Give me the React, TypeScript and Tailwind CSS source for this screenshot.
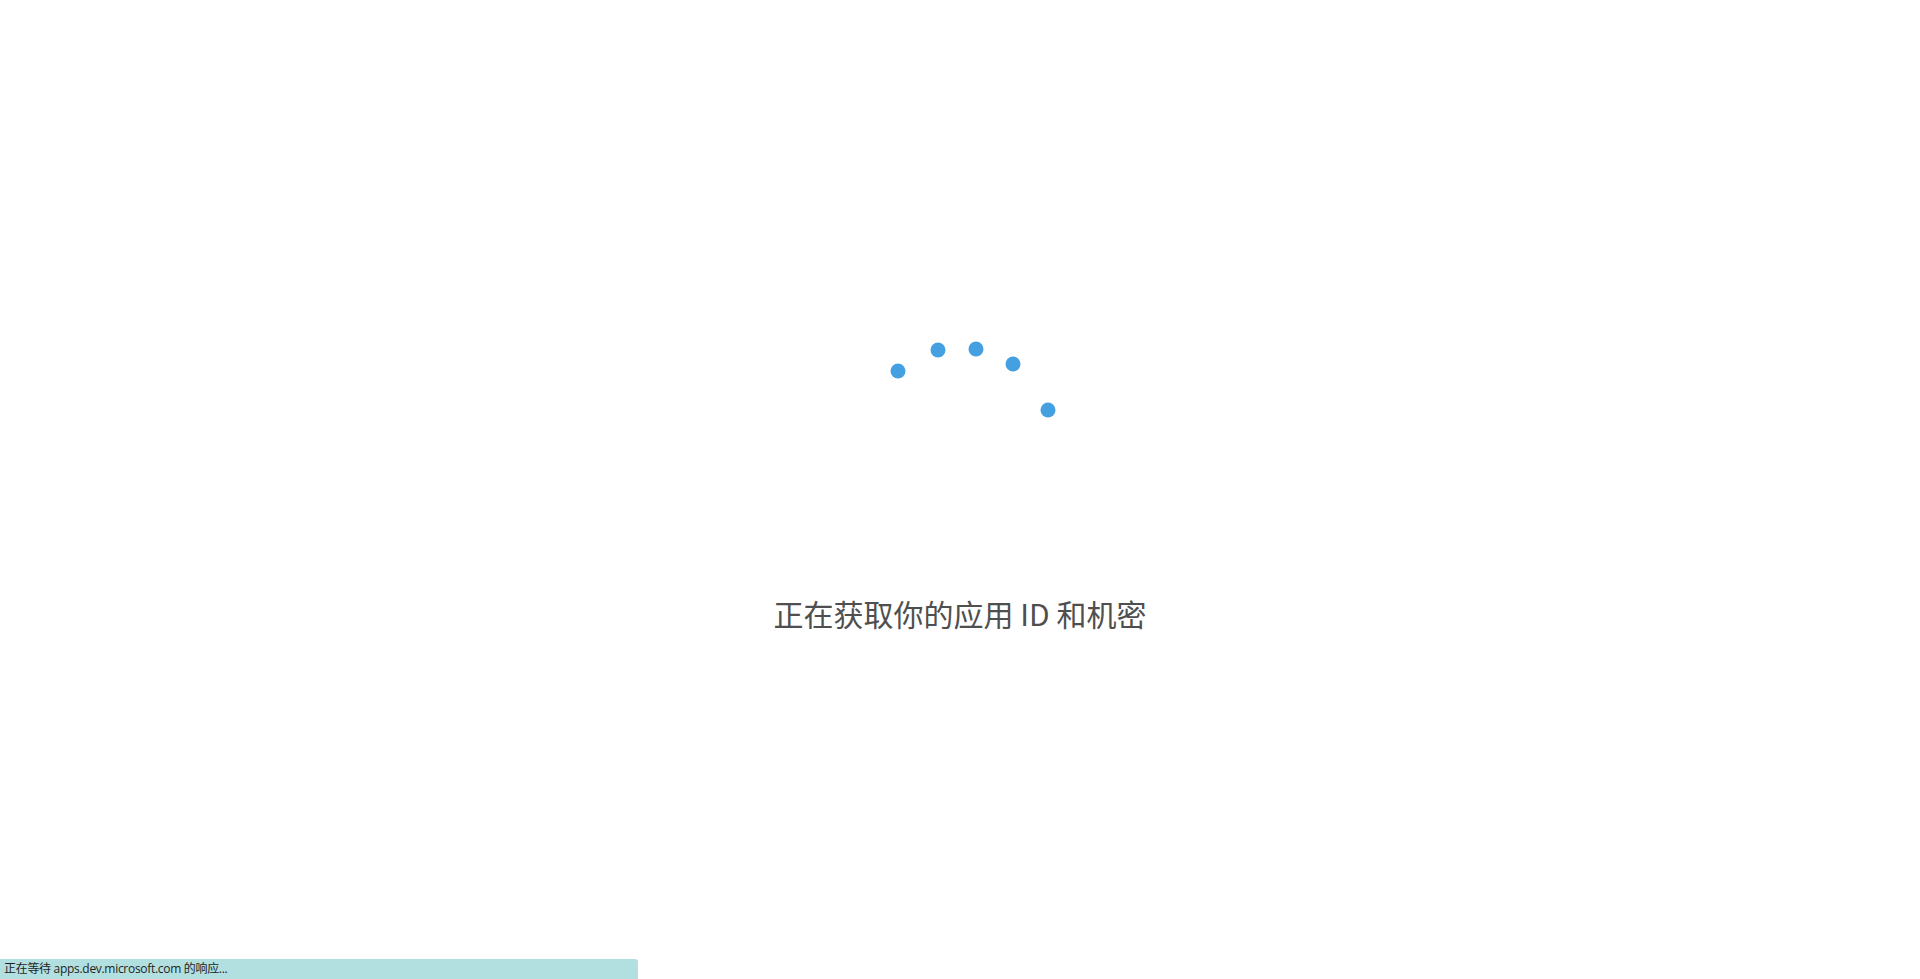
import React from "react";

// spinner dots, measured from the reference (page coords)
const dots = [
  { x: 898, y: 371 },
  { x: 938, y: 350 },
  { x: 976, y: 349 },
  { x: 1013, y: 364 },
  { x: 1048, y: 410 },
];

function Spinner() {
  // svg box starts at x=860, y=341
  return (
    <svg width="200" height="200" viewBox="0 0 200 200" className="block">
      {dots.map((d, i) => (
        <circle key={i} cx={d.x - 860} cy={d.y - 341} r="7.5" fill="#45a0e2" />
      ))}
    </svg>
  );
}

export default function App() {
  return (
    <main className="flex h-[979px] w-full flex-col bg-white font-['Noto_Sans','Noto_Sans_CJK_SC',sans-serif]">
      <div className="flex flex-col items-center pt-[341px]">
        <Spinner />
        <p className="mt-[52px] text-[30px] leading-[40px] text-[#4f4f4f] font-['Noto_Sans_CJK_SC',sans-serif]">
          正在获取你的应用 ID 和机密
        </p>
      </div>
      <div className="mt-auto flex h-[20px] w-[638px] items-center rounded-tr-[3px] bg-[#b2dfdf] pl-[4px]">
        <span className="text-[12px] leading-none text-[#1f1f1f] font-['Open_Sans','Noto_Sans_CJK_SC',sans-serif] tracking-[-0.3px]">
          正在等待 apps.dev.microsoft.com 的响应...
        </span>
      </div>
    </main>
  );
}
